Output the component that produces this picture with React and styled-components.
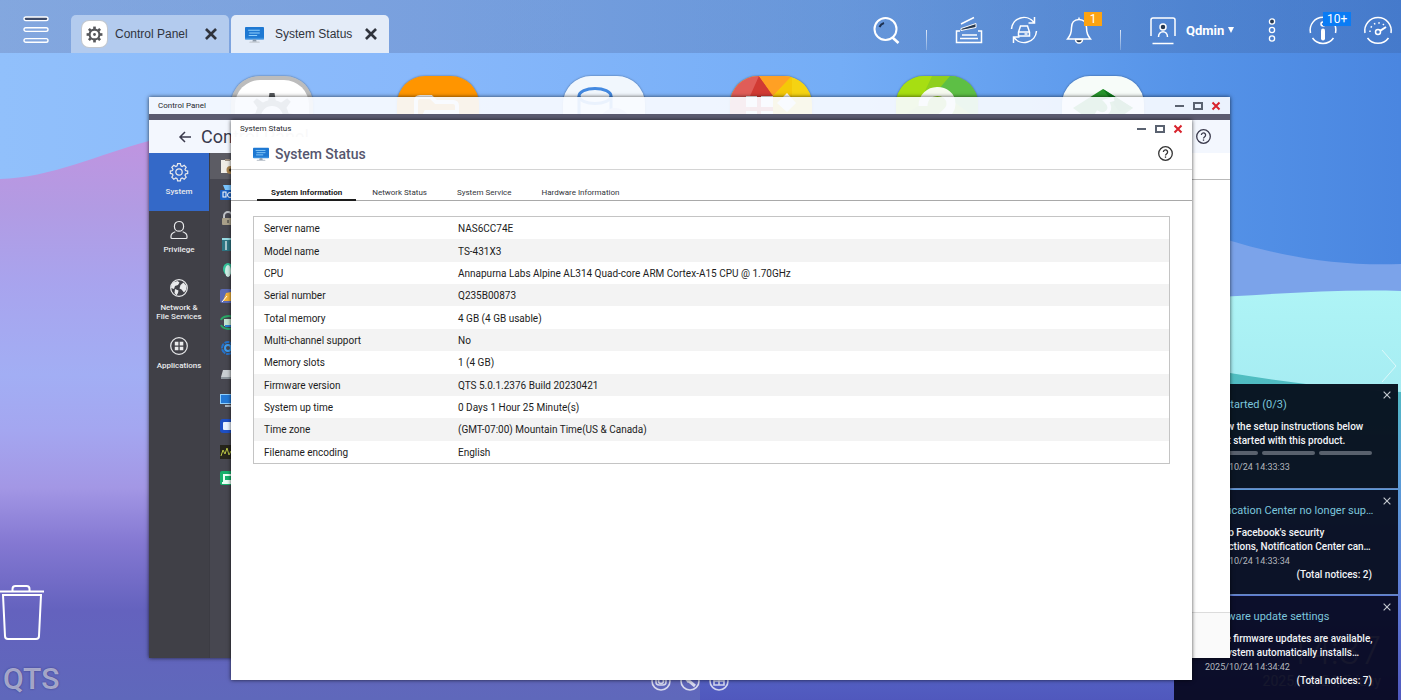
import React, { useState } from 'react'
import styled, { createGlobalStyle } from 'styled-components'

const GlobalStyle = createGlobalStyle`
  * {
    box-sizing: border-box;
  }
  body {
    margin: 0;
    font-family: Roboto, 'Liberation Sans', sans-serif;
    font-size: 10px;
    color: #1c1c1c;
  }
  button {
    font: inherit;
    color: inherit;
    background: none;
    border: none;
    padding: 0;
    cursor: pointer;
  }
  h1, h2, h3, p, ul {
    margin: 0;
    padding: 0;
    list-style: none;
  }
`;

const Desktop = styled.div`
  position: relative;
  display: flex;
  flex-direction: column;
  height: 100vh;
  overflow: hidden;
  background: #6d9cf0;
`;

const Wallpaper = styled.svg`
  position: absolute;
  inset: 0;
  width: 100%;
  height: 100%;
`;

const Icon = styled.svg`
  display: block;
  flex: none;
  width: ${p => p.$size}px;
  height: ${p => p.$size}px;
  fill: none;
  stroke: ${p => p.$solid ? 'none' : 'currentColor'};
  stroke-width: ${p => p.$stroke || 2};
  overflow: visible;
`;

/* top bar */

const TopBar = styled.header`
  position: relative;
  display: flex;
  align-items: flex-end;
  height: 53px;
  flex: none;
  background: linear-gradient(90deg, rgba(110, 130, 180, 0.4), rgba(60, 100, 165, 0.35));
  color: white;
`;

const MenuButton = styled.button`
  width: 71px;
  height: 53px;
  display: flex;
  align-items: center;
  justify-content: center;
  padding-top: 6px;
`;

const Tabs = styled.div`
  display: flex;
  gap: 2px;
`;

const AppTab = styled.div`
  display: flex;
  align-items: center;
  width: 158px;
  height: 38px;
  padding: 0 12px 0 11px;
  border-radius: 5px 5px 0 0;
  background: ${p => p.$active ? '#e4ecf8' : '#b3cbee'};
  color: #30343d;
  font-family: 'Liberation Sans', sans-serif;
  font-size: 12px;
`;

const TabName = styled.button`
  display: flex;
  flex: 1;
  align-items: center;
  gap: 8px;
`;

const TabIcon = styled.span`
  display: flex;
  align-items: center;
  justify-content: center;
  width: 25px;
  height: 26px;
  border-radius: 7px;
  color: #55565a;
  background: ${p => p.$boxed ? 'white' : 'none'};
  box-shadow: ${p => p.$boxed ? '0 0 0 1px #c3c8cf' : 'none'};
`;

const Tools = styled.nav`
  display: flex;
  margin-left: auto;
`;

const Tool = styled.button`
  position: relative;
  display: flex;
  align-items: center;
  justify-content: center;
  width: ${p => p.$width}px;
  height: 53px;
  padding-top: 7px;
`;

const Divider = styled.span`
  width: 1px;
  height: 20px;
  margin: 30px 14px 0;
  background: linear-gradient(rgba(255, 255, 255, 0.8), rgba(255, 255, 255, 0.2));
`;

const UserButton = styled.button`
  display: flex;
  align-items: center;
  gap: 9px;
  width: 118px;
  height: 53px;
  padding: 7px 0 0 14px;
  font-size: 13px;
  font-weight: 700;
`;

const UserName = styled.span`
  display: flex;
  align-items: center;
  gap: 4px;
`;

const Badge = styled.span`
  position: absolute;
  top: 12px;
  left: ${p => p.$left}px;
  min-width: 18px;
  padding: 0 4px;
  line-height: 14px;
  font-size: 12px;
  background: ${p => p.$color};
`;

/* things on the desktop */

const Shortcuts = styled.div`
  position: relative;
  display: flex;
  justify-content: space-between;
  padding: 23px 257px 0 231px;
`;

const Shortcut = styled.button`
  width: 82px;
  height: 82px;
  border-radius: 28px;
  overflow: hidden;
  box-shadow: 0 0 2px rgba(0, 0, 0, 0.5);
`;

const Trash = styled.button`
  position: absolute;
  left: 0;
  bottom: 58px;
  color: white;
`;

const Brand = styled.div`
  position: absolute;
  left: 3px;
  bottom: 4px;
  font-size: 30px;
  line-height: 34px;
  font-weight: 500;
  color: rgba(255, 255, 255, 0.55);
  text-shadow: 0 0 2px rgba(30, 30, 90, 0.6);
`;

const NextPage = styled.button`
  position: absolute;
  right: 4px;
  top: 350px;
  color: rgba(255, 255, 255, 0.6);
`;

const Dock = styled.div`
  position: absolute;
  bottom: 9px;
  left: 0;
  right: 22px;
  display: flex;
  justify-content: center;
  gap: 9px;
  color: rgba(255, 255, 255, 0.75);
`;

const Clock = styled.div`
  position: absolute;
  right: 20px;
  bottom: 11px;
  text-align: right;
  color: white;
  font-size: 14px;
`;

const Time = styled.div`
  font-size: 38px;
  font-weight: 300;
`;

const Notices = styled.aside`
  position: absolute;
  top: 384px;
  right: 3px;
  width: 224px;
  display: flex;
  flex-direction: column;
  gap: 1px;
`;

const Notice = styled.section`
  position: relative;
  height: 105px;
  padding: 14px 26px 0 31px;
  background: ${p => p.$tint};
  border-bottom: 1px solid rgba(125, 165, 230, 0.8);
  font-size: 10px;
  line-height: 14px;
  font-weight: 500;
  color: #f2f4f7;
  white-space: nowrap;
`;

const NoticeTitle = styled.h3`
  margin-bottom: 8px;
  font-size: 11px;
  line-height: 14px;
  font-weight: 400;
  color: #7cc6dc;
`;

const NoticeText = styled.p`
  white-space: pre;
`;

const NoticeDate = styled.p`
  font-size: 9px;
  font-weight: 400;
  color: #b3b7be;
`;

const NoticeTotal = styled.p`
  text-align: right;
`;

const Steps = styled.div`
  display: grid;
  grid-template-columns: repeat(3, 1fr);
  gap: 4px;
  padding: 3px 0 5px;
`;

const Step = styled.span`
  height: 4px;
  border-radius: 2px;
  background: #59616d;
`;

const NoticeClose = styled.button`
  position: absolute;
  top: 7px;
  right: 7px;
  color: #c4c8cf;
`;

/* windows */

const Window = styled.section`
  position: absolute;
  left: ${p => p.$left}px;
  right: ${p => p.$right}px;
  top: ${p => p.$top}px;
  bottom: ${p => p.$bottom}px;
  display: flex;
  flex-direction: column;
  box-shadow: 0 0 4px rgba(0, 0, 0, 0.7);
`;

const TitleBar = styled.div`
  display: flex;
  align-items: center;
  justify-content: space-between;
  flex: none;
  height: 17px;
  padding: 0 9px;
  font-size: 8px;
  color: #26282e;
  background: ${p => p.$front ? 'rgba(255, 255, 255, 0.97)' : 'rgba(248, 251, 255, 0.92)'};
`;

const WindowButtons = styled.div`
  display: flex;
  gap: 8px;
  color: #5a6270;
`;

const Band = styled.div`
  flex: none;
  height: 6px;
  background: #5b5b70;
`;

const PanelHeader = styled.div`
  display: flex;
  align-items: center;
  flex: none;
  height: 33px;
  padding: 0 19px 0 29px;
  gap: 9px;
  background: #f3f7fe;
  color: #3a3a4c;
`;

const PanelTitle = styled.h1`
  flex: 1;
  font-size: 18px;
  line-height: 22px;
  font-weight: 400;
`;

const PanelBody = styled.div`
  display: flex;
  flex: 1;
  min-height: 0;
`;

const Sidebar = styled.nav`
  flex: none;
  width: 60px;
  background: #404047;
`;

const SideItem = styled.button`
  display: flex;
  flex-direction: column;
  align-items: center;
  gap: 6px;
  width: 100%;
  height: 58px;
  padding-top: 10px;
  font-size: 8px;
  line-height: 9px;
  font-weight: 500;
  white-space: pre;
  color: #e9eaec;
  background: ${p => p.$active ? '#3469c8' : 'none'};
`;

const SubList = styled.ul`
  flex: none;
  width: 190px;
  background: #474750;
  border-left: 1px solid #3c3c43;
`;

const SubItem = styled.li`
  height: 26px;
  padding: 6px 0 0 10px;
  background: ${p => p.$active ? '#5c5c64' : 'none'};
`;

const PanelContent = styled.div`
  display: flex;
  flex: 1;
  flex-direction: column;
  background: white;
`;

const PanelStrip = styled.div`
  height: 27px;
  border-bottom: 1px solid #b9b9b9;
`;

const PanelFooter = styled.div`
  height: 46px;
  margin-top: auto;
  background: #fafafa;
  border-top: 1px solid #dcdcdc;
`;

const StatusHeader = styled.div`
  display: flex;
  align-items: center;
  flex: none;
  height: 33px;
  padding: 1px 19px 0 22px;
  gap: 6px;
  color: #333;
  background: white;
  border-bottom: 1px solid #d4d4d4;
`;

const StatusTitle = styled.h2`
  flex: 1;
  font-size: 14px;
  line-height: 16px;
  font-weight: 500;
  color: #56566e;
`;

const StatusTabs = styled.div`
  display: flex;
  gap: 2px;
  flex: none;
  height: 31px;
  padding: 0 26px;
  background: white;
  border-bottom: 1px solid #a9a9a9;
`;

const StatusTab = styled.button`
  height: 31px;
  padding: 17px 14px 0;
  font-size: 8px;
  line-height: 12px;
  font-weight: ${p => p.$active ? 700 : 400};
  color: ${p => p.$active ? '#1c1c1c' : '#33353a'};
  border-bottom: 2px solid ${p => p.$active ? '#1c1c1c' : 'transparent'};
`;

const StatusBody = styled.div`
  flex: 1;
  padding: 15px 22px;
  background: white;
`;

const InfoTable = styled.table`
  width: 100%;
  height: 248px;
  border: 1px solid #c4c4c4;
  border-spacing: 0;
  font-size: 10px;
  line-height: 14px;
  text-align: left;

  tr:nth-child(even) {
    background: #f3f3f3;
  }
  th {
    width: 194px;
    padding: 2px 0 0 10px;
    font-weight: 400;
  }
  td {
    padding: 2px 10px 0;
  }
`;

const info = [
  ['Server name', 'NAS6CC74E'],
  ['Model name', 'TS-431X3'],
  ['CPU', 'Annapurna Labs Alpine AL314 Quad-core ARM Cortex-A15 CPU @ 1.70GHz'],
  ['Serial number', 'Q235B00873'],
  ['Total memory', '4 GB (4 GB usable)'],
  ['Multi-channel support', 'No'],
  ['Memory slots', '1 (4 GB)'],
  ['Firmware version', 'QTS 5.0.1.2376 Build 20230421'],
  ['System up time', '0 Days 1 Hour 25 Minute(s)'],
  ['Time zone', '(GMT-07:00) Mountain Time(US & Canada)'],
  ['Filename encoding', 'English'],
];

const tabNames = ['System Information', 'Network Status', 'System Service', 'Hardware Information'];

const notices = [
  {
    title: 'Get started (0/3)',
    text: 'Follow the setup instructions below\nto get started with this product.',
    date: '2025/10/24 14:33:33',
    steps: 3,
    tint: 'rgba(9, 19, 33, 0.98)',
  },
  {
    title: 'Notification Center no longer sup…',
    text: 'Due to Facebook\'s security\nrestrictions, Notification Center can…',
    date: '2025/10/24 14:33:34',
    total: 2,
    tint: 'rgba(9, 15, 34, 0.97)',
  },
  {
    title: 'Firmware update settings',
    text: 'Some firmware updates are available,\nthe system automatically installs…',
    date: '2025/10/24 14:34:42',
    total: 7,
    tint: 'rgba(7, 8, 32, 0.94)',
  },
];

const teeth = [0, 45, 90, 135, 180, 225, 270, 315];

const GearGlyph = ({ size }) => (
  <Icon $size={size} viewBox="0 0 18 18" $stroke={2.2}>
    <circle cx="9" cy="9" r="5.2" />
    <circle cx="9" cy="9" r="1.5" fill="currentColor" stroke="none" />
    {teeth.map(a => <path key={a} d="M9 3.4V.6" strokeWidth="2.8" transform={`rotate(${a} 9 9)`} />)}
  </Icon>
)

const Monitor = ({ size }) => (
  <Icon $size={size} $solid viewBox="0 0 18 18">
    <rect x="0" y="2" width="18" height="11.5" rx="0.8" fill="#1e78d2" />
    <path d="M0 12h18v1a1 1 0 0 1-1 .8H1A1 1 0 0 1 0 13z" fill="#3b90de" />
    <path d="M3 5h11M4 7.500h10M3.500 10h8" stroke="#8fd0fb" strokeWidth="1" />
    <path d="M7.500 13.800h3l.5 2h-4z" fill="#8b99a8" />
    <path d="M4.500 15.600h9l.6 1.200H4z" fill="#c3cad2" />
  </Icon>
)

const Cross = ({ size, stroke }) => (
  <Icon $size={size} $stroke={stroke} viewBox="0 0 10 10">
    <path d="M.8.8l8.400 8.400M9.200.8L.8 9.200" />
  </Icon>
)

const Help = () => (
  <Icon $size={15} $stroke={1.3} viewBox="0 0 15 15">
    <circle cx="7.5" cy="7.5" r="6.8" />
    <path d="M5.400 6a2.100 2.100 0 1 1 3.300 1.700c-.8.6-1.200.9-1.200 1.800" />
    <path d="M7.500 10.400v1.400" />
  </Icon>
)

const Controls = () => (
  <WindowButtons>
    <button aria-label="Minimize"><Icon $size={10} viewBox="0 0 10 10"><path d="M0 5h9" /></Icon></button>
    <button aria-label="Maximize"><Icon $size={10} viewBox="0 0 10 10"><rect x="1" y="2" width="8" height="6" /></Icon></button>
    <button aria-label="Close"><Icon $size={10} viewBox="0 0 10 10"><path stroke="#d8222c" d="M1.500 1.500l7 7M8.500 1.500l-7 7" /></Icon></button>
  </WindowButtons>
)

const Background = () => (
  <Wallpaper viewBox="0 0 1401 700" preserveAspectRatio="none" aria-hidden="true">
    <defs>
      <linearGradient id="sky" x1="0" y1="0" x2="1" y2="0">
        <stop offset="0" stopColor="#91c0fb" />
        <stop offset="0.3" stopColor="#88b8fb" />
        <stop offset="0.6" stopColor="#74adf6" />
        <stop offset="0.85" stopColor="#5593e8" />
        <stop offset="1" stopColor="#4a86e0" />
      </linearGradient>
      <linearGradient id="hill" gradientUnits="userSpaceOnUse" x1="0" y1="140" x2="0" y2="700">
        <stop offset="0" stopColor="#bf94e0" />
        <stop offset="0.12" stopColor="#b29be3" />
        <stop offset="0.26" stopColor="#a8a4ee" />
        <stop offset="0.42" stopColor="#a2aef4" />
        <stop offset="0.52" stopColor="#a4a6f0" />
        <stop offset="0.62" stopColor="#a397e5" />
        <stop offset="0.72" stopColor="#8478d2" />
        <stop offset="0.84" stopColor="#6462be" />
        <stop offset="1" stopColor="#5f68bb" />
      </linearGradient>
      <linearGradient id="deep" gradientUnits="userSpaceOnUse" x1="0" y1="370" x2="0" y2="700">
        <stop offset="0" stopColor="#4fc0bf" />
        <stop offset="0.3" stopColor="#5a9fd8" />
        <stop offset="0.7" stopColor="#5d78d4" />
        <stop offset="1" stopColor="#5058bd" />
      </linearGradient>
      <linearGradient id="mint" x1="0" y1="0" x2="0" y2="1">
        <stop offset="0" stopColor="#aef4f6" />
        <stop offset="1" stopColor="#9fe6ef" />
      </linearGradient>
    </defs>
    <rect width="1401" height="700" fill="url(#sky)" />
    <path d="M0 179C50 178 100 154 149 141C300 110 500 300 700 420L1401 620V700H0z" fill="url(#hill)" />
    <path d="M1100 190C1200 235 1290 268 1401 264V420H1100z" fill="#7ba3ea" />
    <path d="M1100 302C1220 300 1310 288 1401 291V480H1100z" fill="url(#mint)" />
    <path d="M700 420C900 500 1050 330 1230 373Q1320 388 1401 392V700H700z" fill="url(#deep)" />
  </Wallpaper>
)

const shortcutArt = [
  ['Control Panel', (
    <g key="a">
      <rect width="82" height="82" fill="#bcbcbc" />
      <rect x="4" y="4" width="74" height="80" rx="25" fill="white" />
      <g fill="#55585c">
        {teeth.map(a => <path key={a} d="M37 26l1.500-9h5l1.500 9z" transform={`rotate(${a} 41 41)`} />)}
      </g>
      <circle cx="41" cy="41" r="14" fill="none" stroke="#55585c" strokeWidth="6" />
    </g>
  )],
  ['File Station', (
    <g key="b">
      <rect width="82" height="82" fill="#ff9500" />
      <path d="M19 58V25q0-4 4-4h11l5 5h17q4 0 4 4v6H29z" fill="#ff9500" stroke="white" strokeWidth="4" />
    </g>
  )],
  ['Storage & Snapshots', (
    <g key="c">
      <rect width="82" height="82" fill="#f1f7fd" />
      <ellipse cx="32" cy="20" rx="16" ry="7.5" fill="none" stroke="#4389e0" strokeWidth="3" />
      <path d="M16 20v34c0 9 32 9 32 0V20" fill="none" stroke="#4389e0" strokeWidth="3" />
      <circle cx="52" cy="48" r="16" fill="#bcc8f2" />
    </g>
  )],
  ['App Center', (
    <g key="d">
      <rect width="82" height="82" fill="#f5d312" />
      <path d="M0 0h29l13 20v62H0z" fill="#e05d58" />
      <path d="M29 0L43 19V82H20V20z" fill="#d13a33" />
      <path d="M29 0h33L43 20z" fill="#ffa024" />
      <path d="M62 0L43 20v20l19-8z" fill="#f4c808" />
      <path d="M16 20h11v11H16zM31 20h12v11H31zM57 17l9 10-9 9-10-9zM16 35h11v11H16zM31 35h12v11H31z" fill="white" />
    </g>
  )],
  ['Help Center', (
    <g key="e">
      <rect width="82" height="82" fill="#8fcf1d" />
      <path d="M0 0h36L22 30 0 44z" fill="#a7de12" />
      <path d="M82 0H54L42 14l40 30z" fill="#5dbf45" />
      <path d="M27 30c0-19 28-19 28-2 0 11-13 10-13 22" fill="none" stroke="#f6faef" strokeWidth="9" />
    </g>
  )],
  ['QVPN Service', (
    <g key="f">
      <rect width="82" height="82" fill="#f7fcf9" />
      <path d="M41 13l30 19-30 22-30-22z" fill="#27952c" />
      <path d="M41 13l30 19-14 3z" fill="#0e7a1c" />
      <path d="M34 36c10 6 18-3 10-11l8-2" fill="none" stroke="white" strokeWidth="4" />
    </g>
  )],
];

const sideItems = [
  ['System', (
    <Icon key="s" $size={18} $stroke={1.2} viewBox="0 0 18 18">
      <circle cx="9" cy="9" r="3.2" />
      <path d="M7.600.7h2.800l.5 2.200 1.300.6 2-1.200 2 2-1.200 2 .5 1.300 2.200.5v2.300l-2.200.5-.5 1.300 1.200 2-2 2-2-1.200-1.300.6-.5 2.200H7.600l-.5-2.200-1.300-.6-2 1.200-2-2L3 12.200l-.5-1.300-2.200-.5V8.100l2.200-.5L3 6.300l-1.200-2 2-2 2 1.200 1.300-.6z" />
    </Icon>
  )],
  ['Privilege', (
    <Icon key="p" $size={18} $stroke={1.2} viewBox="0 0 18 18">
      <path d="M9 .5c3 0 4.600 2.200 4.600 4.900S11.700 10.200 9 10.200 4.400 8.100 4.400 5.400 6 .5 9 .5zM5.300 10.700C2.800 11.600 1 12.800 1 15.200v1.300q0 1 1 1h14q1 0 1-1v-1.300c0-2.400-1.800-3.600-4.300-4.500" />
    </Icon>
  )],
  ['Network &\nFile Services', (
    <Icon key="n" $size={18} $stroke={1.2} viewBox="0 0 18 18">
      <circle cx="9" cy="9" r="8.3" />
      <path d="M3 3.500L7.500 2l2 1.500L8 6l-3 1-1 3-3-1 .5-3zM10.500 6l3-2.500L16.500 7l-.5 4-2 2.500-2.500-3-2-1zM5 10l3.500 1.500L8 14l-1.500 2.500L4.500 14z" fill="currentColor" stroke="none" />
    </Icon>
  )],
  ['Applications', (
    <Icon key="a" $size={18} $stroke={1.2} viewBox="0 0 18 18">
      <circle cx="9" cy="9" r="8.3" />
      <path d="M4.800 4.800h3.600v3.600H4.800zM9.700 4.800h3.600v3.600H9.700zM4.800 9.700h3.600v3.600H4.800zM9.700 9.700h3.600v3.600H9.700z" fill="currentColor" stroke="none" />
    </Icon>
  )],
];

const subArt = [
  <g key="0"><rect x="1" y="1" width="13" height="13" fill="#f0ede6" /><path d="M5 0h5v2H5z" fill="#9c8f80" /><circle cx="10.5" cy="11" r="4" fill="#a9844f" /><circle cx="10.5" cy="11" r="1.5" fill="#3c3020" /></g>,
  <g key="1"><path d="M3 0h10l-2 5H5z" fill="#79c5ff" /><rect x="0" y="5" width="15" height="10" rx="1" fill="#1b62c2" /><rect x="3" y="7" width="3" height="5" fill="none" stroke="#fff" /><circle cx="10" cy="10" r="2.5" fill="none" stroke="#fff" /></g>,
  <g key="2"><path d="M4 8V5a4 4 0 0 1 8 0v3" fill="none" stroke="#bfc2c7" strokeWidth="2" /><rect x="2" y="7" width="12" height="7" rx="1" fill="#a9a08a" /><path d="M8 9v3" stroke="#333" /></g>,
  <g key="3"><rect x="2" y="1" width="13" height="13" fill="#2e7583" /><path d="M2 1h13v2H2z" fill="#97dce5" /><path d="M6 4v9" stroke="#a6c5cc" strokeWidth="2" /></g>,
  <g key="4"><ellipse cx="8" cy="6" rx="5" ry="6" fill="#35c29a" /><ellipse cx="8" cy="8" rx="3" ry="6" fill="#cdeee5" /></g>,
  <g key="5"><rect x="0" y="0" width="15" height="14" rx="2" fill="#5b6ab4" /><path d="M3 12l3-8 5-1v9z" fill="#f2b23a" /><path d="M2 13l5-6" stroke="#fff" /></g>,
  <g key="6"><path d="M1 5a8 5 0 0 1 14-2M1 10a8 5 0 0 0 14 2" fill="none" stroke="#2aa866" strokeWidth="2" /><rect x="4" y="4" width="8" height="7" fill="#bfe3cf" /><path d="M5 11h9" stroke="#2a82d0" strokeWidth="2" /></g>,
  <g key="7"><circle cx="8" cy="7" r="6" fill="none" stroke="#2372cc" strokeWidth="2" strokeDasharray="5 1" /><circle cx="8" cy="7" r="3" fill="none" stroke="#3c9cf0" strokeWidth="2" /></g>,
  <g key="8"><path d="M3 3h12v7H1z" fill="#c9ced2" /><path d="M1 10h14v2H1z" fill="#8f979e" /></g>,
  <g key="9"><rect x="0" y="1" width="15" height="10" fill="#8fd0ff" /><rect x="1" y="2" width="14" height="8" fill="#2379d6" /><path d="M5 12h6v2H5z" fill="#a8b3bd" /></g>,
  <g key="10"><rect x="0" y="0" width="15" height="14" rx="3" fill="#1d4fc4" /><rect x="3" y="3" width="11" height="8" rx="1" fill="#e9f3ff" /></g>,
  <g key="11"><rect x="0" y="0" width="15" height="14" fill="#26251b" /><path d="M1 11l2-6 2 4 2-6 2 7 2-4 3 5" fill="none" stroke="#b9c544" /></g>,
  <g key="12"><rect x="0" y="0" width="15" height="14" rx="2" fill="#17b06b" /><path d="M4 10V4h9v6zM2 12h12" fill="none" stroke="#e8fff4" strokeWidth="2" /></g>,
];

const ControlPanel = () => {

  const [active, setActive] = useState(0)

  return (
    <Window $left={149} $right={171} $top={97} $bottom={42} aria-label="Control Panel">
      <TitleBar>
        <span>Control Panel</span>
        <Controls />
      </TitleBar>
      <Band />
      <PanelHeader>
        <button aria-label="Back">
          <Icon $size={14} $stroke={1.5} viewBox="0 0 14 14"><path d="M13 7H2M7 2L2 7l5 5" /></Icon>
        </button>
        <PanelTitle>Control Panel</PanelTitle>
        <button aria-label="Help"><Help /></button>
      </PanelHeader>
      <PanelBody>
        <Sidebar>
          {sideItems.map(([name, icon], i) => (
            <SideItem key={name} $active={active === i} onClick={() => setActive(i)}>
              {icon}
              <span>{name}</span>
            </SideItem>
          ))}
        </Sidebar>
        <SubList>
          {subArt.map((art, i) => (
            <SubItem key={i} $active={i === 0}>
              <Icon $size={15} $solid $stroke={1} viewBox="0 0 15 15">{art}</Icon>
            </SubItem>
          ))}
        </SubList>
        <PanelContent>
          <PanelStrip />
          <PanelFooter />
        </PanelContent>
      </PanelBody>
    </Window>
  )
}

const SystemStatus = () => {

  const [active, setActive] = useState(0)

  return (
    <Window $left={231} $right={209} $top={120} $bottom={20} aria-label="System Status">
      <TitleBar $front>
        <span>System Status</span>
        <Controls />
      </TitleBar>
      <StatusHeader>
        <Monitor size={16} />
        <StatusTitle>System Status</StatusTitle>
        <button aria-label="Help"><Help /></button>
      </StatusHeader>
      <StatusTabs role="tablist">
        {tabNames.map((name, i) => (
          <StatusTab key={name} role="tab" aria-selected={active === i} $active={active === i} onClick={() => setActive(i)}>
            {name}
          </StatusTab>
        ))}
      </StatusTabs>
      <StatusBody>
        <InfoTable>
          <tbody>
            {info.map(([label, value]) => (
              <tr key={label}>
                <th scope="row">{label}</th>
                <td>{value}</td>
              </tr>
            ))}
          </tbody>
        </InfoTable>
      </StatusBody>
    </Window>
  )
}

const Header = () => (
  <TopBar>
    <MenuButton aria-label="Main menu">
      <Icon $size={26} $stroke={1.4} viewBox="0 0 26 26">
        <rect x="1" y="0" width="24" height="3.6" rx="1.8" fill="#3d4a68" />
        <rect x="1" y="10.8" width="24" height="3.6" rx="1.8" />
        <rect x="1" y="21.6" width="24" height="3.6" rx="1.8" />
      </Icon>
    </MenuButton>
    <Tabs>
      <AppTab>
        <TabName>
          <TabIcon $boxed><GearGlyph size={17} /></TabIcon>
          Control Panel
        </TabName>
        <button aria-label="Close Control Panel"><Cross size={12} stroke={2.2} /></button>
      </AppTab>
      <AppTab $active>
        <TabName>
          <TabIcon><Monitor size={19} /></TabIcon>
          System Status
        </TabName>
        <button aria-label="Close System Status"><Cross size={12} stroke={2.2} /></button>
      </AppTab>
    </Tabs>
    <Tools>
      <Tool $width={52} aria-label="Search">
        <Icon $size={28} viewBox="0 0 28 28">
          <circle cx="13.5" cy="13" r="11" />
          <path d="M20.500 21.500l6 5.500" strokeWidth="2.6" />
          <path d="M7.500 11a7 7 0 0 1 4.500-4" stroke="#1d3050" />
        </Icon>
      </Tool>
      <Divider />
      <Tool $width={55} aria-label="Volumes">
        <Icon $size={28} $stroke={1.5} viewBox="0 0 28 28">
          <path d="M5 15H1.500v11.500h25V15H23M7 19h15M5 22.500h18M6 8L19 1.500" />
          <path d="M6 12.500l15-5v4L6 14.500z" fill="#26384f" strokeWidth="1" />
        </Icon>
      </Tool>
      <Tool $width={55} aria-label="Background tasks">
        <Icon $size={28} $stroke={1.5} viewBox="0 0 28 28">
          <path d="M1.500 13A12.500 12.500 0 0 1 24 6.500M24.500 1v6h-6M26.500 15A12.500 12.500 0 0 1 4 21.500M3.500 27v-6h6" />
          <path d="M10.500 10h7l2 6v4h-11v-4zM8.500 16h11M14.500 18h3" />
        </Icon>
      </Tool>
      <Tool $width={55} aria-label="Event notifications">
        <Icon $size={28} $stroke={1.5} viewBox="0 0 28 28">
          <path d="M14 1.500v2M14 3.500c-5 0-7.500 3.500-7.500 8 0 6-1.500 8-4 11.500h23c-2.500-3.500-4-5.500-4-11.500 0-4.500-2.500-8-7.500-8z" />
          <path d="M10.500 23.500a3.500 3.500 0 0 0 7 0z" fill="#26384f" />
        </Icon>
        <Badge $left={33} $color="#fca311">1</Badge>
      </Tool>
      <Divider />
      <UserButton>
        <Icon $size={28} $stroke={1.5} viewBox="0 0 28 28">
          <path d="M2 20V4q0-2 2-2h20q2 0 2 2v16M3.500 27.500h21" />
          <circle cx="14" cy="11" r="3" fill="#26384f" />
          <path d="M9.500 21c0-7 9-7 9 0" />
        </Icon>
        <UserName>
          Qdmin
          <Icon $size={6} $solid viewBox="0 0 6 6"><path d="M0 0h6L3 6z" fill="currentColor" /></Icon>
        </UserName>
      </UserButton>
      <Tool $width={38} aria-label="More">
        <Icon $size={28} $stroke={1.3} viewBox="0 0 28 28">
          <circle cx="14" cy="5.5" r="2.6" fill="#26384f" />
          <circle cx="14" cy="14" r="2.6" />
          <circle cx="14" cy="22.5" r="2.6" />
        </Icon>
      </Tool>
      <Tool $width={64} aria-label="Help resources">
        <Icon $size={28} $stroke={1.5} viewBox="0 0 28 28">
          <path d="M1.500 17A12.800 12.800 0 0 1 14 1.300M26.500 17A12.800 12.800 0 0 0 24 6M3.500 22a12.800 12.800 0 0 0 21 0" />
          <circle cx="14" cy="8" r="2" />
          <path d="M14 14.500v8" strokeWidth="4" strokeLinecap="round" />
        </Icon>
        <Badge $left={32} $color="#0a7cf5">10+</Badge>
      </Tool>
      <Tool $width={46} aria-label="Dashboard">
        <Icon $size={28} $stroke={1.5} viewBox="0 0 28 28">
          <path d="M1 17A13.200 13.200 0 1 1 27 17M3.500 22a13 13 0 0 0 21 0" />
          <circle cx="14" cy="16" r="2.5" />
          <path d="M16 14.800l6-3.800" strokeWidth="2" />
          <path d="M6 16a8.500 8.500 0 0 1 15-6" strokeDasharray="1.5 3" />
        </Icon>
      </Tool>
    </Tools>
  </TopBar>
)

const App = () => {
  return (
    <Desktop>
      <GlobalStyle />
      <Background />
      <Header />
      <Shortcuts>
        {shortcutArt.map(([name, art]) => (
          <Shortcut key={name} aria-label={name}>
            <Icon $size={82} $solid viewBox="0 0 82 82">{art}</Icon>
          </Shortcut>
        ))}
      </Shortcuts>
      <NextPage aria-label="Next page">
        <svg width="15" height="32" viewBox="0 0 15 32" fill="none" stroke="currentColor"><path d="M0 0l14 16L0 32" /></svg>
      </NextPage>
      <Trash aria-label="Recycle bin">
        <svg width="45" height="57" viewBox="0 0 45 57" fill="none" stroke="currentColor" strokeWidth="2">
          <path d="M0 8.500h44M12.500 8V6q0-3 3-3h11q3 0 3 3v2" />
          <path d="M3 12h38l-2 41q0 3-3 3H8q-3 0-3-3z" />
        </svg>
      </Trash>
      <Brand>QTS</Brand>
      <Dock>
        <Icon $size={20} $stroke={1.6} viewBox="0 0 20 20"><circle cx="10" cy="10" r="9" /><rect x="5" y="5" width="10" height="9" rx="3" /><circle cx="10" cy="10" r="2.5" /></Icon>
        <Icon $size={20} $stroke={1.6} viewBox="0 0 20 20"><circle cx="10" cy="10" r="9" /><path d="M5 6l4 5M9 10l6 5" strokeWidth="3" /></Icon>
        <Icon $size={20} $stroke={1.6} viewBox="0 0 20 20"><circle cx="10" cy="10" r="9" /><path d="M5 5h10v9H5zM10 5v9M5 10h10" /></Icon>
      </Dock>
      <Clock>
        <Time>14:37</Time>
        2025/10/24, Friday
      </Clock>
      <Notices>
        {notices.map(n => (
          <Notice key={n.title} $tint={n.tint}>
            <NoticeTitle>{n.title}</NoticeTitle>
            <NoticeText>{n.text}</NoticeText>
            {n.steps && (
              <Steps>
                {Array.from({ length: n.steps }, (_, i) => <Step key={i} />)}
              </Steps>
            )}
            <NoticeDate>{n.date}</NoticeDate>
            {n.total && <NoticeTotal>{`(Total notices: ${n.total})`}</NoticeTotal>}
            <NoticeClose aria-label="Dismiss"><Cross size={8} stroke={1.4} /></NoticeClose>
          </Notice>
        ))}
      </Notices>
      <ControlPanel />
      <SystemStatus />
    </Desktop>
  )
}

export default App
